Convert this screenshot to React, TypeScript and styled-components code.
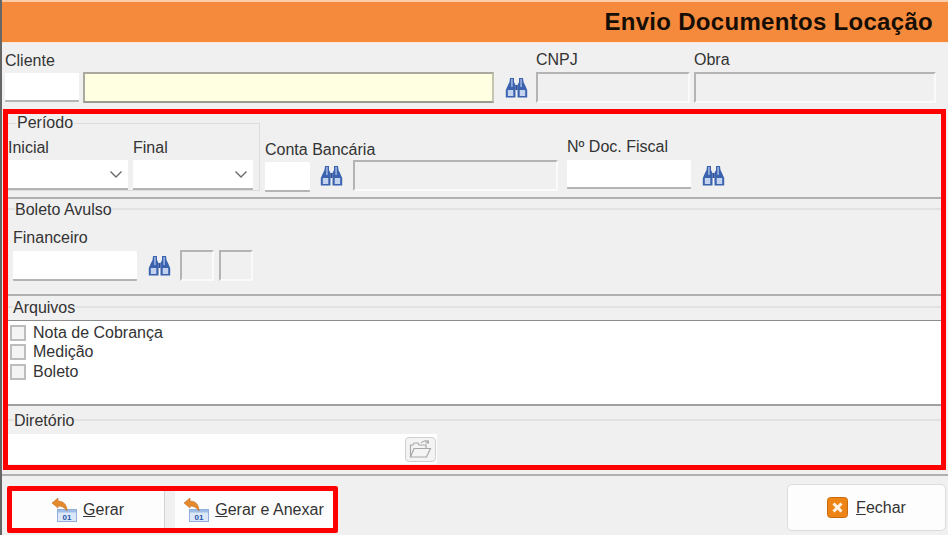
import React from "react";
import styled, { createGlobalStyle } from "styled-components";

const Global = createGlobalStyle`
  html, body { margin: 0; padding: 0; background: #f0f0f0; }
  * { box-sizing: border-box; }
  body { font-family: "Liberation Sans", Arial, sans-serif; font-size: 16px; color: #333; }
`;

const Page = styled.div`
  width: 948px; height: 535px; overflow: hidden; background: #f0f0f0;
  border-left: 2px solid #666; display: flex; flex-direction: column;
`;
const Header = styled.header`
  height: 43px; flex: none; background: #f68a3c; border-top: 2px solid #fbcda8; border-bottom: 1px solid #fde6d4;
  display: flex; align-items: center; justify-content: flex-end; padding: 0 15px 0 0;
`;
const Title = styled.h1`
  margin: 0; font-size: 24px; font-weight: 700; color: #160e05; letter-spacing: 0.3px;
`;
const ClientRow = styled.div`
  height: 66px; flex: none; display: flex; align-items: flex-end; padding: 0 0 6px 3px;
`;
const Field = styled.div<{ $w: number; $ml?: number; $gap?: number; $mb?: number }>`
  width: ${p => p.$w}px; margin-left: ${p => p.$ml ?? 0}px; margin-bottom: ${p => p.$mb ?? 0}px; flex: none;
  display: flex; flex-direction: column; gap: ${p => p.$gap ?? 3}px;
`;
const Label = styled.label`
  font-size: 16px; line-height: 18px; color: #333; white-space: nowrap;
`;
const Input = styled.div<{ $h?: number }>`
  height: ${p => p.$h ?? 30}px; background: #fff; border-bottom: 2px solid #b4b4b4; border-radius: 1px;
`;
const YellowInput = styled.div`
  height: 31px; background: #ffffe1; border: 2px solid #a9a9a0; border-right-color: #c4c4b0; border-bottom-color: #9a9a90;
`;
const Disabled = styled.div<{ $h?: number }>`
  height: ${p => p.$h ?? 31}px; background: #f0f0f0; border: 2px solid #fafafa;
  border-top-color: #b4b4b4; border-left-color: #b4b4b4;
`;
const Binoculars = styled.svg<{ $ml: number }>`
  width: 23px; height: 20px; flex: none; margin-left: ${p => p.$ml}px; margin-bottom: 5px;
`;
const Frame = styled.section`
  height: 361px; flex: none; margin-left: 1px; width: 943px; border: 5px solid #f00;
  display: flex; flex-direction: column; background: #f0f0f0;
`;
const PeriodRow = styled.div`
  height: 83px; flex: none; display: flex; align-items: flex-end; padding-bottom: 6px;
`;
const PeriodBox = styled.fieldset`
  width: 252px; height: 77px; flex: none; margin: 0; padding: 7px 0 0 0;
  border: 1px solid #dcdcdc; border-left: 0; display: flex; gap: 5px; min-inline-size: 0;
`;
const Legend = styled.legend`
  margin-left: 8px; padding: 0 1px; font-size: 16px; line-height: 18px; color: #333;
`;
const SelectBox = styled.div`
  height: 30px; background: #fff; border-bottom: 2px solid #b4b4b4; display: flex; align-items: center;
  justify-content: flex-end; padding-right: 4px; color: #666;
`;
const SectionBlock = styled.div<{ $h: number }>`
  height: ${p => p.$h}px; flex: none; border-top: 2px solid #b0b0b0; display: flex; flex-direction: column;
`;
const SectionTitle = styled.fieldset<{ $mt?: number; $h: number }>`
  margin: ${p => p.$mt ?? 0}px 0 0; padding: 0; height: ${p => p.$h}px; flex: none; border: 0;
  border-top: 2px solid #e2e2e2; min-inline-size: 0;
`;
const SectionLegend = styled.legend<{ $ml: number }>`
  margin-left: ${p => p.$ml}px; padding: 2px 0 0; font-size: 16px; line-height: 18px; color: #333;
`;
const BoletoRow = styled.div`
  display: flex; align-items: flex-end; padding: 0 0 0 5px; margin-top: 8px;
`;
const FileList = styled.div`
  height: 86px; flex: none; background: #fff; border-top: 1px solid #8c8c8c; border-bottom: 2px solid #a0a0a0;
  padding: 2px 0 0 2px; display: flex; flex-direction: column;
`;
const FileItem = styled.div`
  height: 19.5px; display: flex; align-items: center; gap: 7px; font-size: 16px; color: #333;
`;
const Check = styled.span`
  width: 16px; height: 16px; background: #f4f4f4; border: 2px solid #bdbdbd; flex: none;
`;
const DirRow = styled.div`
  width: 429px; height: 30px; background: #fff; display: flex; justify-content: flex-end; align-items: center; padding-right: 1px;
`;
const FolderButton = styled.div`
  width: 31px; height: 25px; background: #f4f4f4; border: 1px solid #d0d0d0; border-radius: 4px;
  display: flex; align-items: center; justify-content: center;
`;
const Rule = styled.div`
  height: 2px; flex: none; background: #b0b0b0; margin-top: 4px;
`;
const Footer = styled.div`
  flex: 1; display: flex; align-items: flex-start; justify-content: space-between; padding: 10px 2px 0 5px;
`;
const ButtonFrame = styled.div`
  width: 331px; height: 47px; border: 5px solid #f00; border-radius: 2px; display: flex; gap: 10px; background: #f0f0f0;
`;
const ActionButton = styled.button<{ $w: number; $divider?: boolean }>`
  width: ${p => p.$w}px; flex: none; height: 100%; padding: 0; border: 0; background: #fdfdfd;
  border-right: ${p => (p.$divider ? "1px solid #d4d4d4" : "0")};
  display: flex; align-items: center; justify-content: center; gap: 6px;
  font: 16px "Liberation Sans", Arial, sans-serif; color: #333;
`;
const CloseButton = styled.button`
  width: 159px; height: 47px; margin-top: -2px; background: #fdfdfd; border: 1px solid #dcdcdc; border-radius: 5px; padding: 0;
  display: flex; align-items: center; justify-content: center; gap: 8px;
  font: 16px "Liberation Sans", Arial, sans-serif; color: #333;
`;
const U = styled.span`
  text-decoration: underline;
`;

const Bino = ({ ml }: { ml: number }) => (
  <Binoculars $ml={ml} viewBox="0 0 23 20">
    <path d="M5 0 H9 V4 L10.5 7 V19.5 H0.8 V12 L3 7 L4.5 4 Z" fill="#3a62ae" />
    <path d="M18 0 H14 V4 L12.5 7 V19.5 H22.2 V12 L20 7 L18.5 4 Z" fill="#3a62ae" />
    <rect x="10.5" y="7" width="2" height="5" fill="#2a4c96" />
    <rect x="2.8" y="12" width="5.5" height="6" fill="#c3d3ee" />
    <rect x="14.7" y="12" width="5.5" height="6" fill="#c3d3ee" />
    <rect x="6" y="1" width="1.8" height="8" fill="#8fa9d8" />
    <rect x="15.2" y="1" width="1.8" height="8" fill="#8fa9d8" />
  </Binoculars>
);

const Chevron = () => (
  <svg width="16" height="16" viewBox="0 0 16 16" fill="none" stroke="#6b6b6b" strokeWidth="1.4">
    <path d="M2.5 5.5 L8 11 L13.5 5.5" />
  </svg>
);

const DocIcon = () => (
  <svg width="25" height="24" viewBox="0 0 25 24">
    <rect x="5.5" y="11.5" width="19" height="12" fill="#dce8f8" stroke="#8fb0dc" />
    <rect x="6" y="12" width="18" height="2.5" fill="#9fbde6" />
    <text x="15" y="22" fontSize="8" fontWeight="700" fontFamily="Liberation Sans" fill="#2b55a8" textAnchor="middle">01</text>
    <path d="M0 5 L6 0 L6 3 C11 3 15 6 15 13 C13 10 10 8 6 8 L6 10 Z" fill="#e48a2c" stroke="#b9651a" strokeWidth="0.5" />
  </svg>
);

const CloseIcon = () => (
  <svg width="21" height="21" viewBox="0 0 21 21">
    <rect x="0.5" y="0.5" width="20" height="20" rx="3" fill="#ee8416" stroke="#c86a0e" />
    <path d="M6.5 6.5 L14.5 14.5 M14.5 6.5 L6.5 14.5" stroke="#fff2e2" strokeWidth="3" />
  </svg>
);

const FolderIcon = () => (
  <svg width="23" height="20" viewBox="0 0 23 20" fill="#f4f4f4" stroke="#a8a8a8" strokeWidth="1.2">
    <path d="M1.5 18 L1.5 6 L4 6 L5 4 L9 4 L10 6 L17 6 L17 9" />
    <path d="M1.5 18 L5 9.5 L21.5 9.5 L17.5 18 Z" />
    <path d="M12 4 C14 1.5 17 1.5 19 3 M19 1 L19.5 4 L16.5 4" fill="none" />
  </svg>
);

export default function App() {
  return (
    <>
      <Global />
      <Page>
        <Header><Title>Envio Documentos Locação</Title></Header>
        <ClientRow>
          <Field $w={74} $gap={3} $mb={1}><Label>Cliente</Label><Input $h={29} /></Field>
          <Field $w={411} $ml={4}><YellowInput /></Field>
          <Bino ml={11} />
          <Field $w={154} $ml={8}><Label>CNPJ</Label><Disabled /></Field>
          <Field $w={242} $ml={4}><Label>Obra</Label><Disabled /></Field>
        </ClientRow>
        <Frame>
          <PeriodRow>
            <PeriodBox>
              <Legend>Período</Legend>
              <Field $w={120}><Label>Inicial</Label><SelectBox><Chevron /></SelectBox></Field>
              <Field $w={120}><Label>Final</Label><SelectBox><Chevron /></SelectBox></Field>
            </PeriodBox>
            <Field $w={45} $ml={5} $mb={-1}><Label>Conta Bancária</Label><Input /></Field>
            <Bino ml={10} />
            <Field $w={205} $ml={10}><Disabled /></Field>
            <Field $w={124} $ml={9} $gap={4} $mb={2}><Label>Nº Doc. Fiscal</Label><Input $h={29} /></Field>
            <Bino ml={11} />
          </PeriodRow>
          <SectionBlock $h={97}>
            <SectionTitle $h={22}><SectionLegend $ml={7}>Boleto Avulso</SectionLegend></SectionTitle>
            <BoletoRow>
              <Field $w={124} $gap={4}><Label>Financeiro</Label><Input /></Field>
              <Bino ml={11} />
              <Field $w={34} $ml={9}><Disabled /></Field>
              <Field $w={34} $ml={5}><Disabled /></Field>
            </BoletoRow>
          </SectionBlock>
          <SectionBlock $h={112}>
            <SectionTitle $mt={1} $h={23}><SectionLegend $ml={5}>Arquivos</SectionLegend></SectionTitle>
            <FileList>
              <FileItem><Check />Nota de Cobrança</FileItem>
              <FileItem><Check />Medição</FileItem>
              <FileItem><Check />Boleto</FileItem>
            </FileList>
          </SectionBlock>
          <SectionTitle $mt={4} $h={24}><SectionLegend $ml={6}>Diretório</SectionLegend></SectionTitle>
          <DirRow><FolderButton><FolderIcon /></FolderButton></DirRow>
        </Frame>
        <Rule />
        <Footer>
          <ButtonFrame>
            <ActionButton $w={153} $divider><DocIcon /><span><U>G</U>erar</span></ActionButton>
            <ActionButton $w={158}><DocIcon /><span><U>G</U>erar e Anexar</span></ActionButton>
          </ButtonFrame>
          <CloseButton><CloseIcon /><span><U>F</U>echar</span></CloseButton>
        </Footer>
      </Page>
    </>
  );
}
